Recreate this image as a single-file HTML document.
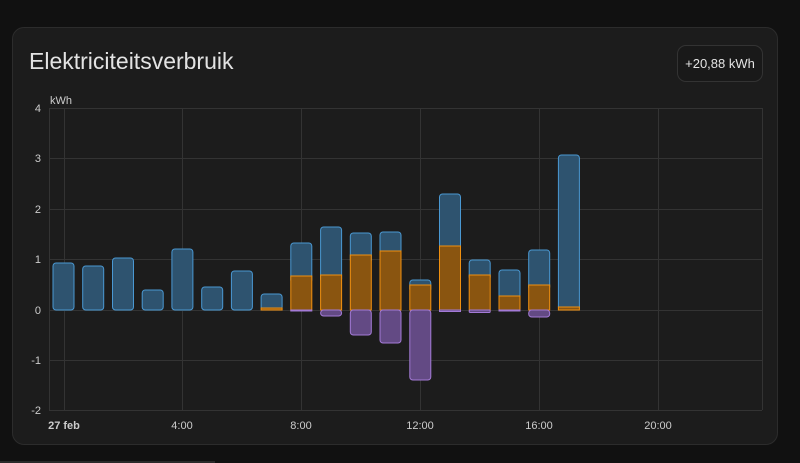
<!DOCTYPE html>
<html><head><style>
body{margin:0;width:800px;height:463px;background:#111;overflow:hidden;font-family:"Liberation Sans",sans-serif}
.card{position:absolute;left:12px;top:27px;width:766px;height:418px;background:#1c1c1c;border:1px solid #2c2c2c;border-radius:12px;box-sizing:border-box}
h1{position:absolute;left:16px;top:20px;margin:0;font-weight:400;font-size:23px;color:#e3e3e3}
.badge{position:absolute;left:664px;top:17px;width:86px;height:37px;border:1px solid #333;border-radius:9px;box-sizing:border-box;color:#e3e3e3;font-size:13px;line-height:35px;text-align:center;background:#191919}
svg{position:absolute;left:0;top:0}
text{font-family:"Liberation Sans",sans-serif;font-size:11px;fill:#ccc}
</style></head><body>
<div class="card"><h1>Elektriciteitsverbruik</h1><div class="badge">+20,88 kWh</div></div>
<svg width="800" height="463">
<g stroke="#333" stroke-width="1">
<line x1="49" y1="108.5" x2="762" y2="108.5"/><line x1="49" y1="158.5" x2="762" y2="158.5"/><line x1="49" y1="209.5" x2="762" y2="209.5"/><line x1="49" y1="259.5" x2="762" y2="259.5"/><line x1="49" y1="310.5" x2="762" y2="310.5"/><line x1="49" y1="360.5" x2="762" y2="360.5"/><line x1="49" y1="410.5" x2="762" y2="410.5"/>
<line x1="49.5" y1="108" x2="49.5" y2="410"/><line x1="64.5" y1="108" x2="64.5" y2="410"/><line x1="182.5" y1="108" x2="182.5" y2="410"/><line x1="301.5" y1="108" x2="301.5" y2="410"/><line x1="420.5" y1="108" x2="420.5" y2="410"/><line x1="539.5" y1="108" x2="539.5" y2="410"/><line x1="658.5" y1="108" x2="658.5" y2="410"/><line x1="762.5" y1="108" x2="762.5" y2="410"/>
</g>
<g text-anchor="end"><text x="41" y="112">4</text><text x="41" y="162">3</text><text x="41" y="213">2</text><text x="41" y="263">1</text><text x="41" y="314">0</text><text x="41" y="364">-1</text><text x="41" y="414">-2</text></g>
<text x="50" y="104">kWh</text>
<g text-anchor="middle"><text x="64" y="429" font-weight="bold" fill="#e0e0e0">27 feb</text><text x="182" y="429">4:00</text><text x="301" y="429">8:00</text><text x="420" y="429">12:00</text><text x="539" y="429">16:00</text><text x="658" y="429">20:00</text></g>
<g fill="#2e536f" stroke="#4a98d2" stroke-width="1">
<rect x="53" y="263" width="21" height="47" rx="3"/>
<rect x="82.7" y="266" width="21" height="44" rx="3"/>
<rect x="112.5" y="258" width="21" height="52" rx="3"/>
<rect x="142.2" y="290" width="21" height="20" rx="3"/>
<rect x="171.9" y="249" width="21" height="61" rx="3"/>
<rect x="201.7" y="287" width="21" height="23" rx="3"/>
<rect x="231.4" y="271" width="21" height="39" rx="3"/>
<rect x="261.1" y="294" width="21" height="16" rx="3"/>
<rect x="290.8" y="243" width="21" height="40" rx="3"/>
<rect x="320.6" y="227" width="21" height="55" rx="3"/>
<rect x="350.3" y="233" width="21" height="30" rx="3"/>
<rect x="380" y="232" width="21" height="27" rx="3"/>
<rect x="409.8" y="280" width="21" height="12" rx="3"/>
<rect x="439.5" y="194" width="21" height="60" rx="3"/>
<rect x="469.2" y="260" width="21" height="20" rx="3"/>
<rect x="499" y="270" width="21" height="33" rx="3"/>
<rect x="528.7" y="250" width="21" height="40" rx="3"/>
<rect x="558.4" y="155" width="21" height="155" rx="3"/>
</g>
<g fill="#8a5510" stroke="#f09010" stroke-width="1">
<rect x="261.1" y="308" width="21" height="2"/>
<rect x="290.8" y="276" width="21" height="34"/>
<rect x="320.6" y="275" width="21" height="35"/>
<rect x="350.3" y="255" width="21" height="55"/>
<rect x="380" y="251" width="21" height="59"/>
<rect x="409.8" y="285" width="21" height="25"/>
<rect x="439.5" y="246" width="21" height="64"/>
<rect x="469.2" y="275" width="21" height="35"/>
<rect x="499" y="296" width="21" height="14"/>
<rect x="528.7" y="285" width="21" height="25"/>
<rect x="558.4" y="307" width="21" height="3"/>
</g>
<g fill="#634a84" stroke="#a37ad6" stroke-width="1">
<rect x="290.8" y="310" width="21" height="1"/>
<rect x="320.6" y="310" width="21" height="6" rx="3"/>
<rect x="350.3" y="310" width="21" height="25" rx="3"/>
<rect x="380" y="310" width="21" height="33" rx="3"/>
<rect x="409.8" y="310" width="21" height="70" rx="3"/>
<rect x="439.5" y="310" width="21" height="1.5"/>
<rect x="469.2" y="310" width="21" height="2.5" rx="1"/>
<rect x="499" y="310" width="21" height="1"/>
<rect x="528.7" y="310" width="21" height="7" rx="3"/>
</g>
</svg>
<div style="position:absolute;left:0;top:461px;width:215px;height:2px;background:#2a2a2a"></div>
</body></html>
